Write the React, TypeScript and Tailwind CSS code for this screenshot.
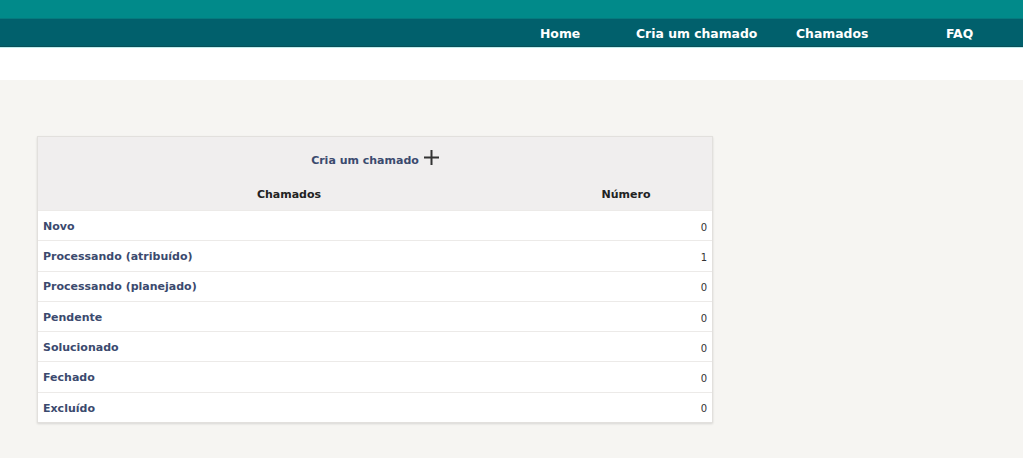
const rows = [
  { label: 'Novo', count: 0 },
  { label: 'Processando (atribuído)', count: 1 },
  { label: 'Processando (planejado)', count: 0 },
  { label: 'Pendente', count: 0 },
  { label: 'Solucionado', count: 0 },
  { label: 'Fechado', count: 0 },
  { label: 'Excluído', count: 0 },
];

const links = [
  { label: 'Home', w: 'w-[96px]' },
  { label: 'Cria um chamado', w: 'w-[160px]' },
  { label: 'Chamados', w: 'w-[150px]' },
  { label: 'FAQ', w: 'w-[28px]' },
];

export default function App() {
  return (
    <div className="min-h-[458px] bg-[#f6f5f2] font-['DejaVu_Sans',Verdana,sans-serif]">
      {/* Header */}
      <div className="h-[18px] bg-[#018a8a]" />
      <div className="h-px bg-[#067a7e]" />
      <nav className="flex h-[27px] items-center bg-[#01606c] pl-[540px] pt-[3px]">
        {links.map((l) => (
          <a key={l.label} href="#" className={`${l.w} shrink-0 whitespace-nowrap text-[12.4px] font-bold leading-none text-white`}>
            {l.label}
          </a>
        ))}
      </nav>
      <div className="h-px bg-[#0a4f58]" />
      <div className="h-px bg-[#bfeeee]" />
      <div className="h-[32px] bg-white" />

      {/* Table */}
      <div className="pl-[37px] pt-[56px]">
        <div className="w-[676px] border border-[#e2e0dd] bg-white shadow-[0_1px_2px_rgba(0,0,0,0.12)]">
          <div className="bg-[#f0eeee]">
            <div className="flex h-[40px] items-end justify-center pb-[8px]">
              <a href="#" className="text-[11px] font-bold text-[#3b4a6e]">Cria um chamado</a>
              <svg className="mb-[4px] ml-[5px]" width="15" height="15" viewBox="0 0 15 15" fill="none" stroke="#333" strokeWidth="2">
                <line x1="7.5" y1="0" x2="7.5" y2="15" />
                <line x1="0" y1="7.5" x2="15" y2="7.5" />
              </svg>
            </div>
            <div className="flex h-[33px] items-center pt-[4px] text-[11px] font-bold text-[#222]">
              <div className="w-[502px] text-center">Chamados</div>
              <div className="flex-1 text-center">Número</div>
            </div>
          </div>
          {rows.map((r) => (
            <div key={r.label} className="flex h-[30.3px] items-center border-t border-[#eceae8] px-[5px] pt-[3px] text-[11px]">
              <a href="#" className="flex-1 font-bold text-[#3b4a6e]">{r.label}</a>
              <span className="text-[10px] text-[#333]">{r.count}</span>
            </div>
          ))}
        </div>
      </div>
    </div>
  );
}
